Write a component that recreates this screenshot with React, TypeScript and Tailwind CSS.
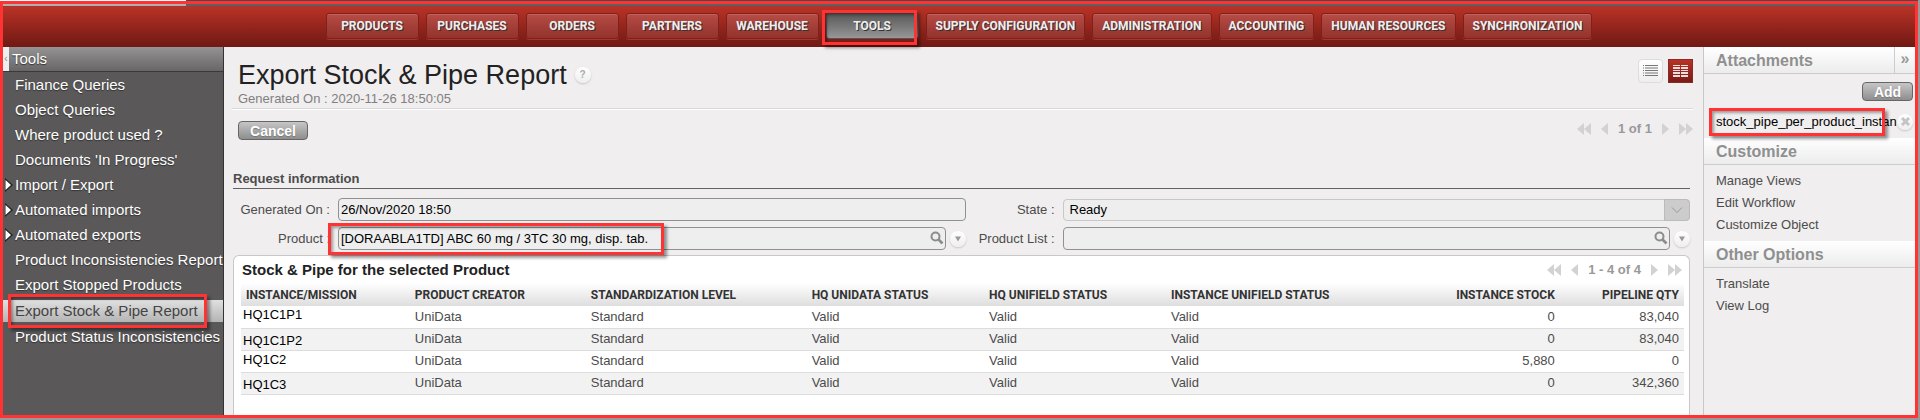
import type { ReactElement, ReactNode } from "react";

import { clsx } from "clsx";

const NAV_ITEMS = [
  "PRODUCTS",
  "PURCHASES",
  "ORDERS",
  "PARTNERS",
  "WAREHOUSE",
  "TOOLS",
  "SUPPLY CONFIGURATION",
  "ADMINISTRATION",
  "ACCOUNTING",
  "HUMAN RESOURCES",
  "SYNCHRONIZATION",
];

interface MenuItem {
  label: string;
  hasChildren?: boolean;
  isActive?: boolean;
}

const MENU_ITEMS: MenuItem[] = [
  { label: "Finance Queries" },
  { label: "Object Queries" },
  { label: "Where product used ?" },
  { label: "Documents 'In Progress'" },
  { label: "Import / Export", hasChildren: true },
  { label: "Automated imports", hasChildren: true },
  { label: "Automated exports", hasChildren: true },
  { label: "Product Inconsistencies Report" },
  { label: "Export Stopped Products" },
  { label: "Export Stock & Pipe Report", isActive: true },
  { label: "Product Status Inconsistencies" },
];

const COLUMNS = [
  { label: "INSTANCE/MISSION", width: "w-[11.7%]" },
  { label: "PRODUCT CREATOR", width: "w-[12.2%]" },
  { label: "STANDARDIZATION LEVEL", width: "w-[15.3%]" },
  { label: "HQ UNIDATA STATUS", width: "w-[12.3%]" },
  { label: "HQ UNIFIELD STATUS", width: "w-[12.6%]" },
  { label: "INSTANCE UNIFIELD STATUS", width: "w-[14%]" },
  { label: "INSTANCE STOCK", width: "w-[13.3%]", isNumber: true },
  { label: "PIPELINE QTY", width: "w-[8.6%]", isNumber: true },
];

const ROWS = [
  { instance: "HQ1C1P1", stock: "0", pipeline: "83,040" },
  { instance: "HQ1C1P2", stock: "0", pipeline: "83,040" },
  { instance: "HQ1C2", stock: "5,880", pipeline: "0" },
  { instance: "HQ1C3", stock: "0", pipeline: "342,360" },
];

function Highlight({ className }: { className: string }): ReactElement {
  return (
    <span
      aria-hidden
      className={clsx(
        "pointer-events-none absolute z-10 border-3 border-[#ff3333] shadow-[3px_3px_3px_rgba(0,0,0,0.4),inset_2px_2px_3px_rgba(0,0,0,0.35)]",
        className
      )}
    />
  );
}

function SearchIcon(): ReactElement {
  return (
    <svg width="14" height="14" viewBox="0 0 14 14" fill="none" stroke="#8c8c8c">
      <circle cx="5.5" cy="5.5" r="4" strokeWidth="2" />
      <path d="M8.5 8.5 12.5 12.5" strokeWidth="2.6" />
    </svg>
  );
}

function RoundButton({ label, children }: { label: string; children: ReactNode }): ReactElement {
  return (
    <button
      type="button"
      aria-label={label}
      className="flex size-4 shrink-0 items-center justify-center rounded-full bg-linear-to-b from-white to-[#eee] shadow-[0_1px_2px_#c4c4c4]"
    >
      {children}
    </button>
  );
}

function DownIcon(): ReactElement {
  return (
    <svg width="6" height="6" viewBox="0 0 6 6" fill="#999">
      <path d="M0 0.5H6L3 5.5Z" />
    </svg>
  );
}

function Pager({ children }: { children: string }): ReactElement {
  return (
    <div className="flex items-center text-[13px] leading-4 font-bold text-[#999]">
      <button type="button" aria-label="First">
        <svg width="14" height="12" viewBox="0 0 14 12" fill="#d2d2d2">
          <path d="M7 0V12L0 6ZM14 0V12L7 6Z" />
        </svg>
      </button>
      <button type="button" aria-label="Previous" className="ml-2.5">
        <svg width="7" height="12" viewBox="0 0 7 12" fill="#d2d2d2">
          <path d="M7 0V12L0 6Z" />
        </svg>
      </button>
      <span className="mx-2.5">{children}</span>
      <button type="button" aria-label="Next">
        <svg width="7" height="12" viewBox="0 0 7 12" fill="#d2d2d2">
          <path d="M0 0V12L7 6Z" />
        </svg>
      </button>
      <button type="button" aria-label="Last" className="ml-2.5">
        <svg width="14" height="12" viewBox="0 0 14 12" fill="#d2d2d2">
          <path d="M0 0V12L7 6ZM7 0V12L14 6Z" />
        </svg>
      </button>
    </div>
  );
}

function GrayButton({ children, className }: { children: string; className: string }): ReactElement {
  return (
    <button
      type="button"
      className={clsx(
        "h-[19px] rounded-sm border border-[#666] bg-linear-to-b from-[#c6c6c6] to-[#8e8e8e] text-[14px] leading-4 font-bold text-white [text-shadow:0_1px_1px_#777]",
        className
      )}
    >
      {children}
    </button>
  );
}

function TopNav(): ReactElement {
  return (
    <nav className="flex h-[41px] items-start justify-center gap-[7px] border-t border-[#a33] bg-linear-to-b from-[#b93226] to-[#701914] pt-1.5">
      {NAV_ITEMS.map((item) => {
        const isActive = item === "TOOLS";

        return (
          <div key={item} className="relative">
            <button
              type="button"
              className={clsx(
                "h-[26px] min-w-[93px] rounded-[3px] border px-[9px] font-[Roboto,sans-serif] text-[12px] leading-4 font-bold text-[#eee] [text-shadow:1px_1px_0_#333]",
                isActive
                  ? "border-[#555] bg-linear-to-b from-[#595959] to-[#979797]"
                  : "border-[#7f211b] bg-linear-to-b from-[#b64c45] to-[#93322c] shadow-[0_1px_0_#a3362e,inset_0_1px_0_#c1625b]"
              )}
            >
              {item}
            </button>
            {isActive && <Highlight className="-top-[3px] right-0.5 -bottom-1.5 -left-1" />}
          </div>
        );
      })}
    </nav>
  );
}

function SideMenu(): ReactElement {
  return (
    <aside className="w-[221px] shrink-0 border-r border-[#333] bg-[#5a5858] text-[15px] whitespace-nowrap text-white">
      <div className="flex h-[25px] items-center border-b border-[#3a3a3a] bg-linear-to-b from-[#959393] to-[#686666]">
        <button
          type="button"
          aria-label="Collapse menu"
          className="flex h-full w-1.5 items-center justify-center bg-[#eee] text-[10px] text-[#888]"
        >
          ‹
        </button>
        <h2 className="pl-[3px] [text-shadow:0_1px_1px_#333]">Tools</h2>
      </div>
      <ul>
        {MENU_ITEMS.map((item) => (
          <li key={item.label} className={clsx("flex items-center", item.isActive ? "h-[27px]" : "h-[25px]")}>
            <a
              href="#"
              className={clsx(
                "relative flex h-[22px] w-full items-center pl-3",
                item.isActive
                  ? "bg-linear-to-b from-[#e0e0e0] to-[#b4b4b4] text-[#444]"
                  : "[text-shadow:0_1px_1px_#333]"
              )}
            >
              {item.hasChildren && (
                <svg className="absolute left-0.5" width="8" height="14" viewBox="0 0 8 14">
                  <path d="M0 0 8 7 0 14Z" fill="#222" />
                  <path d="M0.5 2 6 7 0.5 12Z" fill="#fff" />
                </svg>
              )}
              {item.label}
              {item.isActive && <Highlight className="-inset-y-1.5 right-4 left-[5px]" />}
            </a>
          </li>
        ))}
      </ul>
    </aside>
  );
}

function RequestForm(): ReactElement {
  const fieldClass = "h-[23px] w-full rounded-sm border border-[#8f9191] bg-[#eee] text-[13px] text-black";

  return (
    <form className="grid grid-cols-[94px_1fr_81px_1fr] items-center gap-x-2 gap-y-1.5 pt-[9px] pl-[3px] text-[#4c4c4c]">
      <label htmlFor="generated" className="text-right">
        Generated On :
      </label>
      <input id="generated" readOnly defaultValue="26/Nov/2020 18:50" className={clsx(fieldClass, "px-0.5")} />
      <label htmlFor="state" className="text-right">
        State :
      </label>
      <div className="relative">
        <select
          id="state"
          className="h-[22px] w-full appearance-none rounded-sm border border-[#c8c8c8] bg-[#eee] pl-1.5 text-[13px] text-black"
        >
          <option>Ready</option>
        </select>
        <span className="pointer-events-none absolute inset-y-0 right-0 flex w-[26px] items-center justify-center rounded-r-sm border border-[#bbb] bg-[#ccc]">
          <svg width="12" height="6" viewBox="0 0 12 6" fill="none" stroke="#999">
            <path d="M1 0.5 6 5.5 11 0.5" />
          </svg>
        </span>
      </div>
      <label htmlFor="product" className="text-right">
        Product :
      </label>
      <div className="flex items-center gap-1">
        <div className="relative flex-1">
          <input
            id="product"
            readOnly
            defaultValue="[DORAABLA1TD] ABC 60 mg / 3TC 30 mg, disp. tab."
            className={clsx(fieldClass, "pr-6 pl-0.5")}
          />
          <button type="button" aria-label="Search product" className="absolute top-1 right-0.5">
            <SearchIcon />
          </button>
          <Highlight className="-top-1 -bottom-[5px] -left-2.5 w-[336px]" />
        </div>
        <RoundButton label="Product actions">
          <DownIcon />
        </RoundButton>
      </div>
      <label htmlFor="product-list" className="text-right">
        Product List :
      </label>
      <div className="flex items-center gap-1">
        <div className="relative flex-1">
          <input id="product-list" readOnly className={clsx(fieldClass, "pr-6 pl-0.5")} />
          <button type="button" aria-label="Search product list" className="absolute top-1 right-0.5">
            <SearchIcon />
          </button>
        </div>
        <RoundButton label="Product list actions">
          <DownIcon />
        </RoundButton>
      </div>
    </form>
  );
}

function StockTable(): ReactElement {
  return (
    <section className="mt-[5px] flex-1 rounded-t-md border border-b-0 border-[#c8c8c8] bg-white pr-[5px] pl-[7px]">
      <div className="flex h-[27px] items-center justify-between pr-0.5 pl-px">
        <h2 className="text-[15px] font-bold text-[#222]">Stock &amp; Pipe for the selected Product</h2>
        <Pager>1 - 4 of 4</Pager>
      </div>
      <table className="w-full table-fixed border-collapse text-[#4c4c4c]">
        <thead>
          <tr className="h-[23px] bg-linear-to-b from-white to-[#dedede]">
            {COLUMNS.map((column) => (
              <th
                key={column.label}
                className={clsx(
                  "px-[5px] font-[Roboto,sans-serif] text-[12px] leading-4 font-bold whitespace-nowrap text-[#333]",
                  column.width,
                  column.isNumber ? "text-right" : "text-left"
                )}
              >
                {column.label}
              </th>
            ))}
          </tr>
        </thead>
        <tbody>
          {ROWS.map((row) => (
            <tr
              key={row.instance}
              className="h-[22px] border-b border-[#dcdcdc] odd:align-top even:bg-[#f2f2f2] even:align-bottom"
            >
              <td className="px-0.5 leading-[18px] text-black">{row.instance}</td>
              <td className="px-[5px] align-middle">UniData</td>
              <td className="px-[5px] align-middle">Standard</td>
              <td className="px-[5px] align-middle">Valid</td>
              <td className="px-[5px] align-middle">Valid</td>
              <td className="px-[5px] align-middle">Valid</td>
              <td className="px-[5px] text-right align-middle">{row.stock}</td>
              <td className="px-[5px] text-right align-middle">{row.pipeline}</td>
            </tr>
          ))}
        </tbody>
      </table>
    </section>
  );
}

function PanelTitle({ children }: { children: ReactNode }): ReactElement {
  return (
    <h2 className="flex h-[27px] items-center border-b border-[#ccc] bg-linear-to-b from-white to-[#ececec] pt-0.5 pl-3 text-[16px] font-bold text-[#8f8f8f]">
      {children}
    </h2>
  );
}

function RightPanel(): ReactElement {
  return (
    <aside className="w-[212px] shrink-0 border-l border-[#c8c8c8] text-[#4c4c4c]">
      <div className="relative">
        <PanelTitle>Attachments</PanelTitle>
        <button
          type="button"
          aria-label="Collapse panel"
          className="absolute inset-y-0 right-0 w-[21px] border-l border-[#ccc] pb-1 text-[16px] font-bold text-[#999]"
        >
          »
        </button>
      </div>
      <div className="flex justify-end pt-2 pr-0.5">
        <GrayButton className="w-[51px]">Add</GrayButton>
      </div>
      <div className="relative flex h-[37px] items-center justify-between pt-1 pr-0.5 pl-3">
        <a href="#" className="text-black">
          stock_pipe_per_product_instan
        </a>
        <RoundButton label="Remove attachment">
          <svg width="9" height="9" viewBox="0 0 9 9" stroke="#c4c4c4" strokeWidth="3">
            <path d="M1 1 8 8M8 1 1 8" />
          </svg>
        </RoundButton>
        <Highlight className="top-[7px] left-[5px] h-7 w-[176px]" />
      </div>
      <PanelTitle>Customize</PanelTitle>
      <ul className="py-[5px] pl-3 leading-[22px]">
        <li><a href="#">Manage Views</a></li>
        <li><a href="#">Edit Workflow</a></li>
        <li><a href="#">Customize Object</a></li>
      </ul>
      <PanelTitle>Other Options</PanelTitle>
      <ul className="py-[5px] pl-3 leading-[22px]">
        <li><a href="#">Translate</a></li>
        <li><a href="#">View Log</a></li>
      </ul>
    </aside>
  );
}

export default function App(): ReactElement {
  return (
    <div className="flex min-h-screen flex-col bg-[#999] pr-0.5 pb-0.5 font-['Liberation_Sans',Arial,sans-serif] text-[13px] leading-4">
      <div className="flex h-px">
        <div className="w-[186px] bg-white" />
        <div className="flex-1 bg-[#4a4a4a]" />
      </div>
      <div className="flex flex-1 flex-col border-3 border-[#ff3333] bg-[#f0eeee]">
        <div className="flex h-0.5">
          <div className="w-[183px] bg-[#b0b0b0]" />
          <div className="flex-1 bg-[#606060]" />
        </div>
        <TopNav />
        <div className="flex flex-1">
          <SideMenu />
          <main className="flex min-w-0 flex-1 flex-col pr-2.5 pl-2">
            <header className="flex items-start justify-between border-b border-[#d8d8d8] pt-3 pl-1.5 shadow-[0_1px_0_#fff]">
              <div>
                <div className="flex items-center gap-2">
                  <h1 className="text-[27px] leading-8 text-[#222]">Export Stock &amp; Pipe Report</h1>
                  <RoundButton label="Help">
                    <span className="text-[10px] leading-3 font-bold text-[#aaa]">?</span>
                  </RoundButton>
                </div>
                <p className="pb-px text-[#808080]">Generated On : 2020-11-26 18:50:05</p>
              </div>
              <div className="flex gap-[5px]">
                <button
                  type="button"
                  aria-label="List view"
                  className="flex h-6 w-[25px] items-center justify-center rounded-sm border border-[#ddd] bg-linear-to-b from-white to-[#eee]"
                >
                  <svg width="15" height="12" viewBox="0 0 15 12" fill="#777">
                    <path d="M0 0H1V1H0ZM2 0H15V1H2ZM0 2.5H1V3.5H0ZM2 2.5H15V3.5H2ZM0 5H1V6H0ZM2 5H15V6H2ZM0 7.5H1V8.5H0ZM2 7.5H15V8.5H2ZM0 10H1V11H0ZM2 10H15V11H2Z" />
                  </svg>
                </button>
                <button
                  type="button"
                  aria-label="Form view"
                  className="flex h-6 w-[25px] items-center justify-center border border-[#8a2a24] bg-linear-to-b from-[#b93226] to-[#7a1b16]"
                >
                  <svg width="15" height="12" viewBox="0 0 15 12" fill="#f0dcdc">
                    <path d="M0 0H7V1H0ZM8 0H15V1H8ZM0 2H7V4H0ZM8 2H15V4H8ZM0 5H7V6H0ZM8 5H15V6H8ZM0 7H7V9H0ZM8 7H15V9H8ZM0 10H7V12H0ZM8 10H15V12H8Z" />
                  </svg>
                </button>
              </div>
            </header>
            <div className="flex items-start justify-between pt-3 pl-1.5">
              <GrayButton className="w-[70px]">Cancel</GrayButton>
              <Pager>1 of 1</Pager>
            </div>
            <div className="flex flex-1 flex-col pt-[31px] pr-[3px] pl-px">
              <h2 className="border-b border-[#5f625f] pb-px font-bold text-[#4c4c4c]">Request information</h2>
              <RequestForm />
              <StockTable />
            </div>
          </main>
          <RightPanel />
        </div>
      </div>
    </div>
  );
}
